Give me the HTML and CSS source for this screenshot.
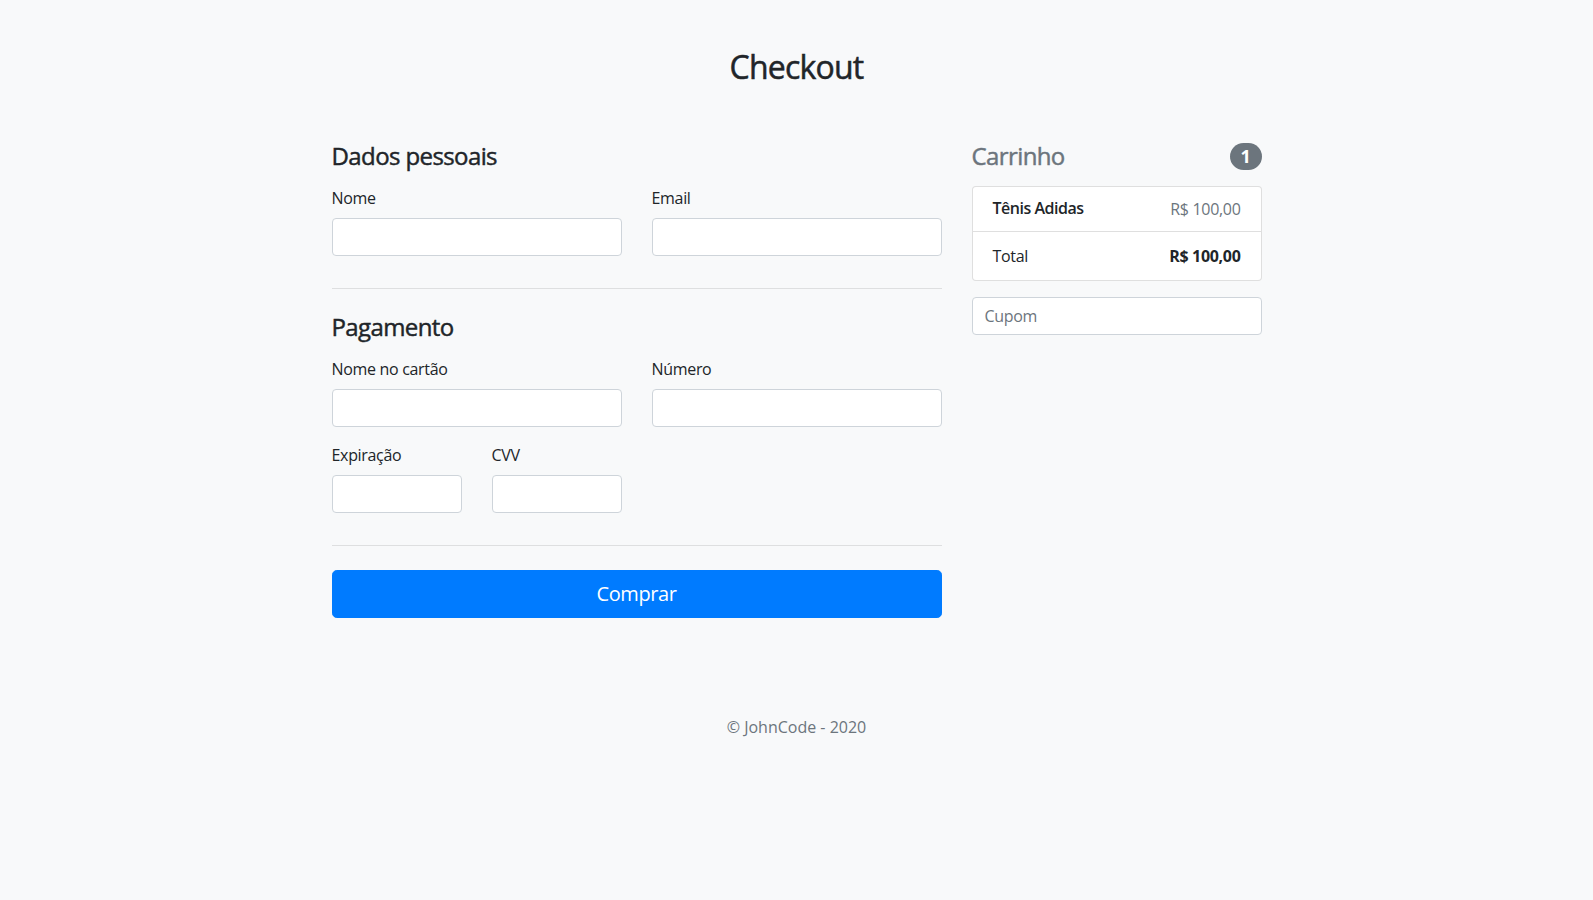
FILE: index.html
```html
<!DOCTYPE html>
<html lang="pt-BR">
<head>
<meta charset="utf-8">
<title>Checkout</title>
<link rel="stylesheet" href="styles.css">
</head>
<body>
<div class="container">
  <div class="page-header">
    <h2 class="page-title">Checkout</h2>
  </div>

  <div class="row">
    <div class="col-main">
      <h4 class="section-title">Dados pessoais</h4>
      <div class="form-row">
        <div class="field half">
          <label class="field-label">Nome</label>
          <input class="text-input" type="text">
        </div>
        <div class="field half">
          <label class="field-label">Email</label>
          <input class="text-input" type="email">
        </div>
      </div>

      <hr class="divider">

      <h4 class="section-title">Pagamento</h4>
      <div class="form-row">
        <div class="field half">
          <label class="field-label">Nome no cartão</label>
          <input class="text-input" type="text">
        </div>
        <div class="field half">
          <label class="field-label">Número</label>
          <input class="text-input" type="text">
        </div>
      </div>
      <div class="form-row">
        <div class="field quarter">
          <label class="field-label">Expiração</label>
          <input class="text-input" type="text">
        </div>
        <div class="field quarter">
          <label class="field-label">CVV</label>
          <input class="text-input" type="text">
        </div>
      </div>

      <hr class="divider">

      <button class="buy-button" type="button">Comprar</button>
    </div>

    <div class="col-side">
      <h4 class="cart-title">
        <span class="muted">Carrinho</span>
        <span class="badge">1</span>
      </h4>
      <ul class="list-group">
        <li class="list-item condensed">
          <div><h6 class="product-name">Tênis Adidas</h6></div>
          <span class="muted">R$ 100,00</span>
        </li>
        <li class="list-item">
          <span>Total</span>
          <strong class="total">R$ 100,00</strong>
        </li>
      </ul>
      <input class="text-input coupon" type="text" placeholder="Cupom">
    </div>
  </div>

  <footer class="footer">
    <p class="copyright">© JohnCode - 2020</p>
  </footer>
</div>
</body>
</html>
```

FILE: styles.css
```css
* {
  box-sizing: border-box;
}

html, body {
  margin: 0;
  padding: 0;
}

body {
  background: #f8f9fa;
  color: #212529;
  font-family: "Open Sans", "Noto Sans", "Liberation Sans", sans-serif;
  font-size: 16px;
  line-height: 24px;
  letter-spacing: -0.02em;
}

.container {
  width: 960px;
  margin: 0 auto;
  padding: 0 15px;
}

.page-header {
  padding: 48px 0;
  text-align: center;
}

.page-title {
  margin: 0 0 8px;
  font-size: 32px;
  font-weight: 500;
  line-height: 38.4px;
  letter-spacing: -0.025em;
  -webkit-text-stroke: 0.5px currentColor;
}

.row {
  display: flex;
  margin: 0 -15px;
}

.col-main {
  width: 640px;
  padding: 0 15px;
}

.col-side {
  width: 320px;
  padding: 0 15px;
}

.section-title {
  margin: 0 0 16px;
  padding-top: 1px;
  font-size: 24px;
  font-weight: 500;
  line-height: 26.8px;
  letter-spacing: -0.025em;
  -webkit-text-stroke: 0.45px currentColor;
}

.form-row {
  display: flex;
  margin: 0 -15px;
}

.field {
  padding: 0 15px;
  margin-bottom: 16px;
}

.field.half {
  width: 50%;
}

.field.quarter {
  width: 25%;
}

.field-label {
  display: inline-block;
  margin-bottom: 8px;
}

.text-input {
  display: block;
  width: 100%;
  height: 38px;
  padding: 6px 12px;
  font-family: inherit;
  font-size: 16px;
  line-height: 24px;
  letter-spacing: -0.02em;
  color: #495057;
  background: #fff;
  border: 1px solid #ced4da;
  border-radius: 4px;
  outline: none;
}

.text-input::placeholder {
  color: #6c757d;
}

.divider {
  margin: 16px 0 24px;
  border: 0;
  border-top: 1px solid rgba(0, 0, 0, 0.1);
  height: 0;
}

.buy-button {
  display: block;
  width: 100%;
  height: 48px;
  padding: 8px 16px;
  font-family: inherit;
  font-size: 20px;
  line-height: 30px;
  letter-spacing: -0.02em;
  color: #fff;
  background: #007bff;
  border: 1px solid #007bff;
  border-radius: 4.8px;
  cursor: pointer;
}

.cart-title {
  display: flex;
  justify-content: space-between;
  align-items: center;
  margin: 0 0 16px;
  font-size: 24px;
  font-weight: 500;
  line-height: 27.8px;
  letter-spacing: -0.025em;
}

.cart-title .muted {
  -webkit-text-stroke: 0.45px currentColor;
}

.muted {
  color: #6c757d;
}

.badge {
  display: inline-block;
  padding: 4.5px 10.8px;
  font-size: 18px;
  font-weight: 700;
  line-height: 1;
  letter-spacing: 0;
  color: #fff;
  background: #6c757d;
  border-radius: 160px;
}

.list-group {
  list-style: none;
  margin: 0 0 16px;
  padding: 0;
}

.list-item {
  display: flex;
  justify-content: space-between;
  padding: 12px 20px;
  background: #fff;
  border: 1px solid rgba(0, 0, 0, 0.125);
}

.list-item + .list-item {
  border-top-width: 0;
}

.list-item:first-child {
  border-radius: 4px 4px 0 0;
}

.list-item:last-child {
  border-radius: 0 0 4px 4px;
}

.list-item.condensed {
  line-height: 20px;
}

.product-name {
  margin: 0;
  font-size: 16px;
  font-weight: 600;
  line-height: 19.2px;
  letter-spacing: -0.03em;
}

.total {
  font-weight: 700;
}

.footer {
  margin: 49px 0 48px;
  padding-top: 48px;
  text-align: center;
  color: #6c757d;
}

.copyright {
  margin: 0 0 4px;
  letter-spacing: 0;
}
```
